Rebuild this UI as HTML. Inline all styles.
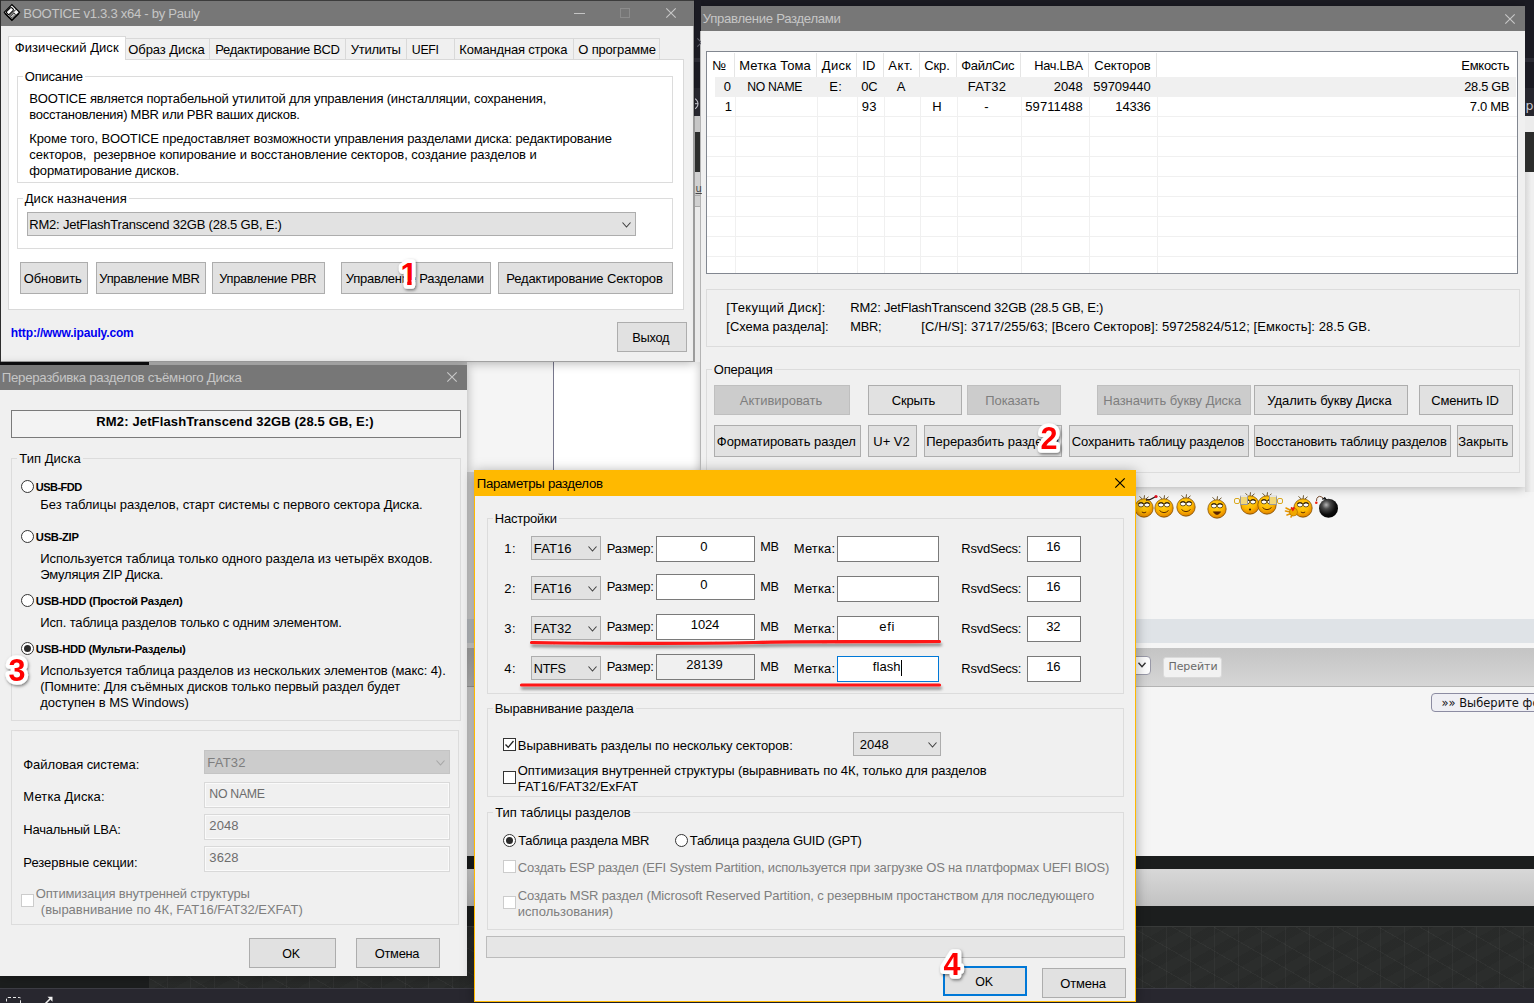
<!DOCTYPE html>
<html lang="ru"><head><meta charset="utf-8"><title>BOOTICE</title>
<style>
html,body{margin:0;padding:0}
body{width:1534px;height:1003px;overflow:hidden;position:relative;background:#f5f5f5;font-family:"Liberation Sans", sans-serif;font-size:13px}
.b{position:absolute;box-sizing:border-box}
.t{position:absolute;white-space:pre;line-height:16px}
svg{position:absolute;overflow:visible}
</style></head><body>
<div class="b" style="left:694px;top:0px;width:840px;height:58px;background:#1b1b23;"></div>
<div class="b" style="left:694px;top:58px;width:840px;height:4px;background:#2b2b34;"></div>
<div class="b" style="left:694px;top:62px;width:840px;height:26px;background:#1b1b23;"></div>
<div class="b" style="left:694px;top:88px;width:840px;height:28px;background:#26262e;"></div>
<div class="b" style="left:694px;top:116px;width:840px;height:15px;background:#d8d8d8;"></div>
<div class="b" style="left:694px;top:131px;width:840px;height:41px;background:#2d2e2d;"></div>
<div class="b" style="left:694px;top:172px;width:840px;height:190px;background:#e4e4e4;"></div>
<div class="b" style="left:694px;top:172px;width:7px;height:190px;background:#d6d6d6;"></div>
<div class="b" style="left:699px;top:172px;width:1px;height:190px;background:#b8b8b8;"></div>
<div class="b" style="left:694px;top:362px;width:840px;height:130px;background:#f5f5f5;"></div>
<div class="b" style="left:467px;top:362px;width:86px;height:110px;background:#f5f5f5;"></div>
<div class="b" style="left:553px;top:362px;width:1px;height:110px;background:#77778c;"></div>
<div class="b" style="left:554px;top:362px;width:147px;height:110px;background:#ffffff;"></div>
<div class="b" style="left:0px;top:362px;width:149px;height:4px;background:#111113;"></div>
<div class="b" style="left:149px;top:362px;width:318px;height:4px;background:#cfcfcf;"></div>
<div class="b" style="left:467px;top:619px;width:1067px;height:24px;background:#dfe3e7;"></div>
<div class="b" style="left:467px;top:648px;width:1067px;height:39px;background:linear-gradient(#c4c4c4,#d6d6d6);border-bottom:1px solid #b4b4b4;"></div>
<div class="b" style="left:467px;top:856px;width:1067px;height:13px;background:#1c1e1e;"></div>
<div class="b" style="left:467px;top:869px;width:1067px;height:37px;background:linear-gradient(#d8d8d8,#c2c2c2);"></div>
<div class="b" style="left:0px;top:906px;width:1534px;height:21px;background:#1c1e1e;"></div>
<div class="b" style="left:0px;top:926px;width:1534px;height:63px;background:repeating-linear-gradient(90deg,rgba(255,255,255,0.035) 0 1px,transparent 1px 23.8px),repeating-linear-gradient(30deg,rgba(255,255,255,0.03) 0 1px,transparent 1px 20.6px),repeating-linear-gradient(-30deg,rgba(0,0,0,0.06) 0 10px,transparent 10px 20.6px),#2b2d2c;border-top:1px solid #383a39;border-bottom:1px solid #3c3e3d;"></div>
<div class="b" style="left:0px;top:926px;width:149px;height:63px;background:#1c1e1e;"></div>
<div class="b" style="left:0px;top:988px;width:1534px;height:1px;background:#3c3c44;"></div>
<div class="b" style="left:0px;top:989px;width:1534px;height:14px;background:#28272f;"></div>
<div class="b" style="left:467px;top:472px;width:7px;height:384px;background:rgba(0,0,0,0.12);"></div>
<svg style="left:1129.7px;top:492.3px" width="28" height="30" viewBox="-14 -16 28 30"><defs><radialGradient id="sg0" cx="45%" cy="35%" r="70%"><stop offset="0" stop-color="#ffd21e"/><stop offset="0.55" stop-color="#fdb800"/><stop offset="0.85" stop-color="#e78b00"/><stop offset="1" stop-color="#9a5a00"/></radialGradient></defs><path d="M-1.5 -8.7 L-4.5 -11.7 M0 -8.7 L0.5 -12.7 M1.5 -8.7 L4.5 -11.2" stroke="#4a3000" stroke-width="0.8" fill="none"/><circle cx="0" cy="0" r="9.2" fill="url(#sg0)" stroke="#7a4a00" stroke-width="0.7"/><ellipse cx="-3" cy="-3.2" rx="2.7" ry="2.1" fill="#fff" stroke="#3a2400" stroke-width="0.7"/><ellipse cx="3" cy="-3.2" rx="2.7" ry="2.1" fill="#fff" stroke="#3a2400" stroke-width="0.7"/><path d="M-5.5 -4.2 Q-3 -6.2 -0.5 -4.2 M0.5 -4.2 Q3 -6.2 5.5 -4.2" fill="none" stroke="#2a1a00" stroke-width="1.1"/><path d="M-2.2 4 Q0 5.8 2.2 4" fill="none" stroke="#5a2a00" stroke-width="1"/></svg>
<svg style="left:1149.7px;top:492px" width="28" height="30" viewBox="-14 -16 28 30"><defs><radialGradient id="sg1" cx="45%" cy="35%" r="70%"><stop offset="0" stop-color="#ffd21e"/><stop offset="0.55" stop-color="#fdb800"/><stop offset="0.85" stop-color="#e78b00"/><stop offset="1" stop-color="#9a5a00"/></radialGradient></defs><path d="M-1.5 -8.7 L-4.5 -11.7 M0 -8.7 L0.5 -12.7 M1.5 -8.7 L4.5 -11.2" stroke="#4a3000" stroke-width="0.8" fill="none"/><circle cx="0" cy="0" r="9.2" fill="url(#sg1)" stroke="#7a4a00" stroke-width="0.7"/><ellipse cx="-3" cy="-3.2" rx="2.7" ry="2.1" fill="#fff" stroke="#3a2400" stroke-width="0.7"/><ellipse cx="3" cy="-3.2" rx="2.7" ry="2.1" fill="#fff" stroke="#3a2400" stroke-width="0.7"/><path d="M-5.5 -4.2 Q-3 -6.2 -0.5 -4.2 M0.5 -4.2 Q3 -6.2 5.5 -4.2" fill="none" stroke="#2a1a00" stroke-width="1.1"/><path d="M-4.5 2.5 Q0 6.8 4.5 2.5" fill="none" stroke="#5a2a00" stroke-width="1"/></svg>
<svg style="left:1171.5px;top:491.2px" width="28" height="30" viewBox="-14 -16 28 30"><defs><radialGradient id="sg2" cx="45%" cy="35%" r="70%"><stop offset="0" stop-color="#ffd21e"/><stop offset="0.55" stop-color="#fdb800"/><stop offset="0.85" stop-color="#e78b00"/><stop offset="1" stop-color="#9a5a00"/></radialGradient></defs><path d="M-1.5 -8.7 L-4.5 -11.7 M0 -8.7 L0.5 -12.7 M1.5 -8.7 L4.5 -11.2" stroke="#4a3000" stroke-width="0.8" fill="none"/><circle cx="0" cy="0" r="9.2" fill="url(#sg2)" stroke="#7a4a00" stroke-width="0.7"/><ellipse cx="-3" cy="-3.2" rx="2.7" ry="2.1" fill="#fff" stroke="#3a2400" stroke-width="0.7"/><ellipse cx="3" cy="-3.2" rx="2.7" ry="2.1" fill="#fff" stroke="#3a2400" stroke-width="0.7"/><path d="M-5.5 -4.2 Q-3 -6.2 -0.5 -4.2 M0.5 -4.2 Q3 -6.2 5.5 -4.2" fill="none" stroke="#2a1a00" stroke-width="1.1"/><path d="M-4.5 2.5 Q0 6.8 4.5 2.5" fill="none" stroke="#5a2a00" stroke-width="1"/></svg>
<svg style="left:1202.5px;top:492.5px" width="28" height="30" viewBox="-14 -16 28 30"><defs><radialGradient id="sg3" cx="45%" cy="35%" r="70%"><stop offset="0" stop-color="#ffd21e"/><stop offset="0.55" stop-color="#fdb800"/><stop offset="0.85" stop-color="#e78b00"/><stop offset="1" stop-color="#9a5a00"/></radialGradient></defs><path d="M-1.5 -8.7 L-4.5 -11.7 M0 -8.7 L0.5 -12.7 M1.5 -8.7 L4.5 -11.2" stroke="#4a3000" stroke-width="0.8" fill="none"/><circle cx="0" cy="0" r="9.2" fill="url(#sg3)" stroke="#7a4a00" stroke-width="0.7"/><ellipse cx="-3" cy="-3.2" rx="2.7" ry="2.1" fill="#fff" stroke="#3a2400" stroke-width="0.7"/><ellipse cx="3" cy="-3.2" rx="2.7" ry="2.1" fill="#fff" stroke="#3a2400" stroke-width="0.7"/><path d="M-5.5 -4.2 Q-3 -6.2 -0.5 -4.2 M0.5 -4.2 Q3 -6.2 5.5 -4.2" fill="none" stroke="#2a1a00" stroke-width="1.1"/><path d="M-3.8 2.8 Q0 8.5 3.8 2.8 Z" fill="#5a2000" stroke="#5a2a00" stroke-width="0.6"/></svg>
<svg style="left:1236px;top:489.4px" width="28" height="30" viewBox="-14 -16 28 30"><defs><radialGradient id="sg4" cx="45%" cy="35%" r="70%"><stop offset="0" stop-color="#ffd21e"/><stop offset="0.55" stop-color="#fdb800"/><stop offset="0.85" stop-color="#e78b00"/><stop offset="1" stop-color="#9a5a00"/></radialGradient></defs><path d="M-1.5 -8.7 L-4.5 -11.7 M0 -8.7 L0.5 -12.7 M1.5 -8.7 L4.5 -11.2" stroke="#4a3000" stroke-width="0.8" fill="none"/><circle cx="0" cy="0" r="9.2" fill="url(#sg4)" stroke="#7a4a00" stroke-width="0.7"/><ellipse cx="-3" cy="-3.2" rx="2.7" ry="2.1" fill="#fff" stroke="#3a2400" stroke-width="0.7"/><ellipse cx="3" cy="-3.2" rx="2.7" ry="2.1" fill="#fff" stroke="#3a2400" stroke-width="0.7"/><path d="M-5.5 -4.2 Q-3 -6.2 -0.5 -4.2 M0.5 -4.2 Q3 -6.2 5.5 -4.2" fill="none" stroke="#2a1a00" stroke-width="1.1"/><circle cx="0" cy="4.5" r="1.1" fill="#3a1a00"/></svg>
<svg style="left:1253.3px;top:489.2px" width="28" height="30" viewBox="-14 -16 28 30"><defs><radialGradient id="sg5" cx="45%" cy="35%" r="70%"><stop offset="0" stop-color="#ffd21e"/><stop offset="0.55" stop-color="#fdb800"/><stop offset="0.85" stop-color="#e78b00"/><stop offset="1" stop-color="#9a5a00"/></radialGradient></defs><path d="M-1.5 -8.7 L-4.5 -11.7 M0 -8.7 L0.5 -12.7 M1.5 -8.7 L4.5 -11.2" stroke="#4a3000" stroke-width="0.8" fill="none"/><circle cx="0" cy="0" r="9.2" fill="url(#sg5)" stroke="#7a4a00" stroke-width="0.7"/><ellipse cx="-3" cy="-3.2" rx="2.7" ry="2.1" fill="#fff" stroke="#3a2400" stroke-width="0.7"/><ellipse cx="3" cy="-3.2" rx="2.7" ry="2.1" fill="#fff" stroke="#3a2400" stroke-width="0.7"/><path d="M-5.5 -4.2 Q-3 -6.2 -0.5 -4.2 M0.5 -4.2 Q3 -6.2 5.5 -4.2" fill="none" stroke="#2a1a00" stroke-width="1.1"/><path d="M-4.5 2.5 Q0 6.8 4.5 2.5" fill="none" stroke="#5a2a00" stroke-width="1"/></svg>
<svg style="left:1288.6px;top:492.2px" width="28" height="30" viewBox="-14 -16 28 30"><defs><radialGradient id="sg6" cx="45%" cy="35%" r="70%"><stop offset="0" stop-color="#ffd21e"/><stop offset="0.55" stop-color="#fdb800"/><stop offset="0.85" stop-color="#e78b00"/><stop offset="1" stop-color="#9a5a00"/></radialGradient></defs><path d="M-1.5 -8.7 L-4.5 -11.7 M0 -8.7 L0.5 -12.7 M1.5 -8.7 L4.5 -11.2" stroke="#4a3000" stroke-width="0.8" fill="none"/><circle cx="0" cy="0" r="9.2" fill="url(#sg6)" stroke="#7a4a00" stroke-width="0.7"/><ellipse cx="-3" cy="-3.2" rx="2.7" ry="2.1" fill="#fff" stroke="#3a2400" stroke-width="0.7"/><ellipse cx="3" cy="-3.2" rx="2.7" ry="2.1" fill="#fff" stroke="#3a2400" stroke-width="0.7"/><path d="M-5.5 -4.2 Q-3 -6.2 -0.5 -4.2 M0.5 -4.2 Q3 -6.2 5.5 -4.2" fill="none" stroke="#2a1a00" stroke-width="1.1"/><path d="M-2.2 4 Q0 5.8 2.2 4" fill="none" stroke="#5a2a00" stroke-width="1"/></svg>
<svg style="left:1146px;top:494px" width="14" height="8" viewBox="0 0 14 8"><path d="M0 6 Q5 6 9 3" fill="none" stroke="#2a1a1a" stroke-width="1.3"/><circle cx="10" cy="2.5" r="1.6" fill="#e01020"/></svg>
<div class="b" style="left:1240px;top:495px;width:8px;height:10px;background:#f1d77a;border:1px solid #9a9a9a;border-radius:1px;border-top:2px solid #e8e8e8;"></div>
<div class="b" style="left:1234px;top:498px;width:6px;height:6px;border:1.5px solid #d8a820;border-radius:2px;"></div>
<div class="b" style="left:1269px;top:495px;width:8px;height:10px;background:#f1d77a;border:1px solid #9a9a9a;border-radius:1px;border-top:2px solid #e8e8e8;"></div>
<div class="b" style="left:1277px;top:498px;width:6px;height:6px;border:1.5px solid #d8a820;border-radius:2px;"></div>
<svg style="left:1285px;top:505px" width="15" height="13" viewBox="0 0 15 13"><path d="M1 3 L5 5 M0.5 6 L5 7 M2 10 L6 8.5 M6 12 L8 9" stroke="#e59500" stroke-width="1.6" stroke-linecap="round"/><circle cx="8.5" cy="7" r="4" fill="#f2a800" stroke="#a86a00" stroke-width="0.6"/><path d="M6.5 4.5 Q5 2.5 6.5 2 Q7.5 2 7.8 3 Q8.2 2 9.2 2 Q10.5 2.5 9 4.8 L7.8 6.5 Z" fill="#e82010"/></svg>
<svg style="left:1314px;top:494px" width="28" height="26" viewBox="0 0 28 26"><defs><radialGradient id="bg1" cx="38%" cy="32%" r="72%"><stop offset="0" stop-color="#b4b4b4"/><stop offset="0.3" stop-color="#4a4a4a"/><stop offset="0.7" stop-color="#0c0c0c"/><stop offset="1" stop-color="#000"/></radialGradient></defs><circle cx="14.5" cy="14.3" r="9.5" fill="url(#bg1)"/><path d="M8 5.2 L11 3.5 L12.5 6" fill="#222" stroke="#111" stroke-width="1"/><path d="M9 4 Q5 0.5 2.8 4.5 L2.5 7" fill="none" stroke="#6a3a1a" stroke-width="0.9"/><circle cx="2.3" cy="8.8" r="1.3" fill="#f02010"/></svg>
<div class="b" style="left:1120px;top:656px;width:31px;height:19px;background:#fdfdfd;border:1px solid #9a9aa8;border-radius:4px;"></div>
<svg style="left:1138px;top:662px" width="8" height="6" viewBox="0 0 8 6"><path d="M0.5 0.8 L4 4.6 L7.5 0.8" fill="none" stroke="#333" stroke-width="1.4"/></svg>
<div class="b" style="left:1163px;top:657px;width:59px;height:21px;background:#f2f2f2;border:1px solid #dadada;border-radius:3px;"></div>
<span class="t" style="left:1168.41px;top:659.00px;font-size:11px;color:#6a6a6a;font-family:'DejaVu Sans', 'Liberation Sans', sans-serif;letter-spacing:-0.045px;">Перейти</span>
<div class="b" style="left:1431px;top:693px;width:120px;height:19px;background:#efeff4;border:1px solid #8c8ca2;border-radius:4px;"></div>
<span class="t" style="left:1441.50px;top:695.00px;font-size:11.5px;color:#111;font-family:'DejaVu Sans', 'Liberation Sans', sans-serif;">»» Выберите форум</span>
<div class="b" style="left:6px;top:997px;width:15px;height:10px;border:1.3px solid #e8e8e8;border-style:dashed;border-radius:2px;"></div>
<svg style="left:44px;top:996px" width="10" height="8" viewBox="0 0 10 8"><path d="M1 8 L6 3" fill="none" stroke="#f0f0f0" stroke-width="1.5"/><path d="M3.5 0.8 L8.5 0.8 L8.5 5.8 Z" fill="#f0f0f0"/></svg>
<div class="b" style="left:0px;top:0px;width:694px;height:362px;background:#f0f0f0;box-shadow:0 1px 10px rgba(0,0,0,0.30);border-right:1px solid #a0a0a0;border-bottom:1px solid #a0a0a0;"></div>
<div class="b" style="left:0px;top:0px;width:694px;height:26px;background:#777777;border-top:1px solid #3c3c3c;"></div>
<div class="b" style="left:0px;top:0px;width:1px;height:362px;background:#2e2e2e;"></div>
<svg style="left:0;top:0" width="24" height="24" viewBox="0 0 24 24"><g transform="translate(11.9 4.6) rotate(45)"><rect x="1" y="1" width="10.8" height="10.8" fill="#000"/><rect x="0" y="0" width="10.8" height="10.8" fill="#f6f6f6" stroke="#000" stroke-width="1.2"/><rect x="1.1" y="2.3" width="3.9" height="7.2" rx="1.1" fill="#fff" stroke="#000" stroke-width="1.1"/><path d="M6.3 0.6 V10.2" stroke="#000" stroke-width="0.9"/><rect x="7.3" y="4.4" width="2.6" height="5.2" fill="#fff" stroke="#000" stroke-width="0.8"/><path d="M8.6 4.6 V9.4" stroke="#222" stroke-width="0.6"/></g></svg>
<span class="t" style="left:23.27px;top:6.00px;font-size:13.12px;color:#c6c6c6;letter-spacing:-0.300px;">BOOTICE v1.3.3 x64 - by Pauly</span>
<div class="b" style="left:574px;top:12.5px;width:10.5px;height:1px;background:#c4c4c4;"></div>
<div class="b" style="left:620px;top:8px;width:10px;height:10px;border:1px solid #8c8c8c;"></div>
<svg style="left:666px;top:8px" width="10" height="10" viewBox="0 0 10 10"><path d="M0.3 0.3 L9.7 9.7 M9.7 0.3 L0.3 9.7" fill="none" stroke="#c8c8c8" stroke-width="1.1"/></svg>
<div class="b" style="left:8px;top:59px;width:676px;height:251px;background:#ffffff;border:1px solid #d9d9d9;"></div>
<div class="b" style="left:125px;top:38px;width:85px;height:22px;background:#f0f0f0;border:1px solid #d9d9d9;"></div>
<span class="t" style="left:128.30px;top:42.00px;font-size:13px;color:#000;letter-spacing:-0.074px;">Образ Диска</span>
<div class="b" style="left:209px;top:38px;width:137px;height:22px;background:#f0f0f0;border:1px solid #d9d9d9;"></div>
<span class="t" style="left:215.30px;top:42.00px;font-size:12.97px;color:#000;letter-spacing:-0.300px;">Редактирование BCD</span>
<div class="b" style="left:345px;top:38px;width:62px;height:22px;background:#f0f0f0;border:1px solid #d9d9d9;"></div>
<span class="t" style="left:350.80px;top:42.00px;font-size:13px;color:#000;letter-spacing:-0.246px;">Утилиты</span>
<div class="b" style="left:406px;top:38px;width:49px;height:22px;background:#f0f0f0;border:1px solid #d9d9d9;"></div>
<span class="t" style="left:411.80px;top:42.00px;font-size:12.33px;color:#000;letter-spacing:-0.300px;">UEFI</span>
<div class="b" style="left:454px;top:38px;width:120px;height:22px;background:#f0f0f0;border:1px solid #d9d9d9;"></div>
<span class="t" style="left:459.30px;top:42.00px;font-size:13px;color:#000;letter-spacing:-0.189px;">Командная строка</span>
<div class="b" style="left:573px;top:38px;width:87px;height:22px;background:#f0f0f0;border:1px solid #d9d9d9;"></div>
<span class="t" style="left:578.30px;top:42.00px;font-size:13px;color:#000;letter-spacing:-0.194px;">О программе</span>
<div class="b" style="left:8px;top:36px;width:118px;height:24px;background:#ffffff;border:1px solid #d9d9d9;border-bottom:none;"></div>
<span class="t" style="left:14.80px;top:39.50px;font-size:13px;color:#000;letter-spacing:0.063px;">Физический Диск</span>
<div class="b" style="left:17px;top:76px;width:656px;height:107px;border:1px solid #dcdcdc;"></div>
<div class="b" style="left:22.5px;top:74px;width:62.5px;height:5px;background:#fff;"></div>
<span class="t" style="left:24.80px;top:69.00px;font-size:13px;color:#000;letter-spacing:-0.241px;">Описание</span>
<span class="t" style="left:29.30px;top:91.00px;font-size:13px;color:#000;letter-spacing:-0.177px;">BOOTICE является портабельной утилитой для управления (инсталляции, сохранения,</span>
<span class="t" style="left:29.30px;top:107.00px;font-size:13px;color:#000;letter-spacing:-0.248px;">восстановления) MBR или PBR ваших дисков.</span>
<span class="t" style="left:29.30px;top:131.00px;font-size:13px;color:#000;letter-spacing:-0.140px;">Кроме того, BOOTICE предоставляет возможности управления разделами диска: редактирование</span>
<span class="t" style="left:29.30px;top:147.00px;font-size:13px;color:#000;letter-spacing:-0.063px;">секторов,  резервное копирование и восстановление секторов, создание разделов и</span>
<span class="t" style="left:29.30px;top:163.00px;font-size:13px;color:#000;letter-spacing:-0.137px;">форматирование дисков.</span>
<div class="b" style="left:17px;top:198px;width:656px;height:51px;border:1px solid #dcdcdc;"></div>
<div class="b" style="left:22.5px;top:196px;width:106.5px;height:5px;background:#fff;"></div>
<span class="t" style="left:24.80px;top:190.50px;font-size:13px;color:#000;letter-spacing:0.013px;">Диск назначения</span>
<div class="b" style="left:27px;top:212px;width:609px;height:24px;background:#e2e2e2;border:1px solid #adadad;"></div>
<span class="t" style="left:29.30px;top:216.50px;font-size:13px;color:#000;letter-spacing:-0.212px;">RM2: JetFlashTranscend 32GB (28.5 GB, E:)</span>
<svg style="left:622px;top:222px" width="9" height="6" viewBox="0 0 9 6"><path d="M0.5 0.5 L4.5 5 L8.5 0.5" fill="none" stroke="#404040" stroke-width="1.1"/></svg>
<div class="b" style="left:20px;top:262px;width:68px;height:32px;background:#e1e1e1;border:1px solid #adadad;"></div>
<span class="t" style="left:23.80px;top:271.00px;font-size:13px;color:#000;letter-spacing:-0.122px;">Обновить</span>
<div class="b" style="left:96px;top:262px;width:110px;height:32px;background:#e1e1e1;border:1px solid #adadad;"></div>
<span class="t" style="left:99.30px;top:271.00px;font-size:12.98px;color:#000;letter-spacing:-0.300px;">Управление MBR</span>
<div class="b" style="left:212px;top:262px;width:113px;height:32px;background:#e1e1e1;border:1px solid #adadad;"></div>
<span class="t" style="left:219.30px;top:271.00px;font-size:12.81px;color:#000;letter-spacing:-0.300px;">Управление PBR</span>
<div class="b" style="left:341px;top:262px;width:150px;height:32px;background:#e1e1e1;border:1px solid #adadad;"></div>
<span class="t" style="left:345.80px;top:271.00px;font-size:13px;color:#000;letter-spacing:-0.219px;">Управление Разделами</span>
<div class="b" style="left:498px;top:262px;width:175px;height:32px;background:#e1e1e1;border:1px solid #adadad;"></div>
<span class="t" style="left:506.30px;top:271.00px;font-size:13px;color:#000;letter-spacing:-0.135px;">Редактирование Секторов</span>
<div class="b" style="left:617px;top:322px;width:70px;height:30px;background:#e1e1e1;border:1px solid #adadad;"></div>
<span class="t" style="left:632.30px;top:330.00px;font-size:12.83px;color:#000;letter-spacing:-0.300px;">Выход</span>
<span class="t" style="left:10.85px;top:325.00px;font-size:12px;color:#0000f0;font-weight:bold;letter-spacing:-0.153px;">http://www.ipauly.com</span>
<svg style="left:0;top:0" width="1534" height="1003" viewBox="0 0 1534 1003"><defs><filter id="sh1b" filterUnits="userSpaceOnUse" x="385.4" y="245" width="50" height="60"><feDropShadow dx="1" dy="1.5" stdDeviation="1.8" flood-color="#000" flood-opacity="0.5"/></filter><clipPath id="c1a"><rect x="390.4" y="245" width="40" height="32"/><rect x="403.59999999999997" y="255" width="11.6" height="33.9" rx="3.7"/></clipPath><clipPath id="c1b"><rect x="390.4" y="245" width="40" height="35"/><rect x="407.2" y="255" width="4.4" height="30.2"/></clipPath></defs><g filter="url(#sh1b)"><text x="400.4" y="285" font-family="Liberation Sans, sans-serif" font-weight="bold" font-size="30.5" fill="#fff" stroke="#fff" stroke-width="7.5" stroke-linejoin="round" clip-path="url(#c1a)">1</text></g><text x="400.4" y="285" font-family="Liberation Sans, sans-serif" font-weight="bold" font-size="30.5" fill="#ff0000" clip-path="url(#c1b)" aria-hidden="true">1</text></svg>
<div class="b" style="left:701px;top:6px;width:824px;height:481px;background:#f0f0f0;box-shadow:0 1px 10px rgba(0,0,0,0.30);"></div>
<div class="b" style="left:701px;top:6px;width:824px;height:25px;background:#777777;"></div>
<span class="t" style="left:702.77px;top:11.00px;font-size:13.15px;color:#c6c6c6;letter-spacing:-0.300px;">Управление Разделами</span>
<svg style="left:1505px;top:13.5px" width="10" height="10" viewBox="0 0 10 10"><path d="M0.3 0.3 L9.7 9.7 M9.7 0.3 L0.3 9.7" fill="none" stroke="#c8c8c8" stroke-width="1.1"/></svg>
<div class="b" style="left:706px;top:51px;width:812px;height:223px;background:#ffffff;border:1px solid #828790;"></div>
<div class="b" style="left:734px;top:53px;width:1px;height:24px;background:#e5e5e5;"></div>
<div class="b" style="left:816px;top:53px;width:1px;height:24px;background:#e5e5e5;"></div>
<div class="b" style="left:856px;top:53px;width:1px;height:24px;background:#e5e5e5;"></div>
<div class="b" style="left:883px;top:53px;width:1px;height:24px;background:#e5e5e5;"></div>
<div class="b" style="left:919px;top:53px;width:1px;height:24px;background:#e5e5e5;"></div>
<div class="b" style="left:956px;top:53px;width:1px;height:24px;background:#e5e5e5;"></div>
<div class="b" style="left:1020px;top:53px;width:1px;height:24px;background:#e5e5e5;"></div>
<div class="b" style="left:1088px;top:53px;width:1px;height:24px;background:#e5e5e5;"></div>
<div class="b" style="left:1156px;top:53px;width:1px;height:24px;background:#e5e5e5;"></div>
<div class="b" style="left:715px;top:77px;width:801px;height:20px;background:#f0f0f0;"></div>
<div class="b" style="left:707px;top:116px;width:810px;height:1px;background:#f0f0f0;"></div>
<div class="b" style="left:707px;top:136px;width:810px;height:1px;background:#f0f0f0;"></div>
<div class="b" style="left:707px;top:156px;width:810px;height:1px;background:#f0f0f0;"></div>
<div class="b" style="left:707px;top:176px;width:810px;height:1px;background:#f0f0f0;"></div>
<div class="b" style="left:707px;top:196px;width:810px;height:1px;background:#f0f0f0;"></div>
<div class="b" style="left:707px;top:216px;width:810px;height:1px;background:#f0f0f0;"></div>
<div class="b" style="left:707px;top:236px;width:810px;height:1px;background:#f0f0f0;"></div>
<div class="b" style="left:707px;top:256px;width:810px;height:1px;background:#f0f0f0;"></div>
<div class="b" style="left:735px;top:97px;width:1px;height:176px;background:#f0f0f0;"></div>
<div class="b" style="left:817px;top:97px;width:1px;height:176px;background:#f0f0f0;"></div>
<div class="b" style="left:857px;top:97px;width:1px;height:176px;background:#f0f0f0;"></div>
<div class="b" style="left:884px;top:97px;width:1px;height:176px;background:#f0f0f0;"></div>
<div class="b" style="left:920px;top:97px;width:1px;height:176px;background:#f0f0f0;"></div>
<div class="b" style="left:957px;top:97px;width:1px;height:176px;background:#f0f0f0;"></div>
<div class="b" style="left:1021px;top:97px;width:1px;height:176px;background:#f0f0f0;"></div>
<div class="b" style="left:1089px;top:97px;width:1px;height:176px;background:#f0f0f0;"></div>
<div class="b" style="left:1157px;top:97px;width:1px;height:176px;background:#f0f0f0;"></div>
<span class="t" style="left:712.30px;top:57.50px;font-size:13px;color:#000;">№</span>
<span class="t" style="left:739.30px;top:57.50px;font-size:13px;color:#000;letter-spacing:0.053px;">Метка Тома</span>
<span class="t" style="left:821.80px;top:57.50px;font-size:13px;color:#000;letter-spacing:0.284px;">Диск</span>
<span class="t" style="left:862.30px;top:57.50px;font-size:13px;color:#000;letter-spacing:0.200px;">ID</span>
<span class="t" style="left:888.30px;top:57.50px;font-size:13px;color:#000;letter-spacing:0.565px;">Акт.</span>
<span class="t" style="left:924.30px;top:57.50px;font-size:13px;color:#000;letter-spacing:-0.130px;">Скр.</span>
<span class="t" style="left:961.30px;top:57.50px;font-size:12.97px;color:#000;letter-spacing:-0.300px;">ФайлСис</span>
<span class="t" style="left:1034.30px;top:57.50px;font-size:12.8px;color:#000;letter-spacing:-0.300px;">Нач.LBA</span>
<span class="t" style="left:1094.30px;top:57.50px;font-size:13px;color:#000;letter-spacing:-0.057px;">Секторов</span>
<span class="t" style="left:1461.30px;top:57.50px;font-size:13px;color:#000;letter-spacing:-0.287px;">Емкость</span>
<span class="t" style="left:723.80px;top:79.00px;font-size:13px;color:#000;">0</span>
<span class="t" style="left:747.30px;top:79.00px;font-size:12.21px;color:#000;letter-spacing:-0.300px;">NO NAME</span>
<span class="t" style="left:829.30px;top:79.00px;font-size:13px;color:#000;letter-spacing:0.302px;">E:</span>
<span class="t" style="left:861.30px;top:79.00px;font-size:12.9px;color:#000;letter-spacing:-0.300px;">0C</span>
<span class="t" style="left:896.80px;top:79.00px;font-size:13px;color:#000;">A</span>
<span class="t" style="left:967.80px;top:79.00px;font-size:13px;color:#000;letter-spacing:0.211px;">FAT32</span>
<span class="t" style="left:1053.80px;top:79.00px;font-size:13px;color:#000;letter-spacing:-0.005px;">2048</span>
<span class="t" style="left:1093.30px;top:79.00px;font-size:13px;color:#000;letter-spacing:-0.055px;">59709440</span>
<span class="t" style="left:1464.30px;top:79.00px;font-size:12.81px;color:#000;letter-spacing:-0.300px;">28.5 GB</span>
<span class="t" style="left:724.80px;top:99.00px;font-size:13px;color:#000;">1</span>
<span class="t" style="left:861.80px;top:99.00px;font-size:13px;color:#000;letter-spacing:0.216px;">93</span>
<span class="t" style="left:932.30px;top:99.00px;font-size:13px;color:#000;">H</span>
<span class="t" style="left:984.30px;top:99.00px;font-size:13px;color:#000;">-</span>
<span class="t" style="left:1025.30px;top:99.00px;font-size:13px;color:#000;letter-spacing:0.066px;">59711488</span>
<span class="t" style="left:1115.30px;top:99.00px;font-size:13px;color:#000;letter-spacing:-0.151px;">14336</span>
<span class="t" style="left:1469.80px;top:99.00px;font-size:13px;color:#000;letter-spacing:-0.298px;">7.0 MB</span>
<div class="b" style="left:706px;top:289px;width:814px;height:58px;border:1px solid #dcdcdc;"></div>
<span class="t" style="left:726.30px;top:300.00px;font-size:13px;color:#000;letter-spacing:0.313px;">[Текущий Диск]:</span>
<span class="t" style="left:850.30px;top:300.00px;font-size:13px;color:#000;letter-spacing:-0.199px;">RM2: JetFlashTranscend 32GB (28.5 GB, E:)</span>
<span class="t" style="left:726.30px;top:318.50px;font-size:13px;color:#000;letter-spacing:-0.024px;">[Схема раздела]:</span>
<span class="t" style="left:850.30px;top:318.50px;font-size:12.84px;color:#000;letter-spacing:-0.300px;">MBR;</span>
<span class="t" style="left:921.30px;top:318.50px;font-size:13px;color:#000;letter-spacing:0.078px;">[C/H/S]: 3717/255/63; [Всего Секторов]: 59725824/512; [Емкость]: 28.5 GB.</span>
<div class="b" style="left:706px;top:369px;width:814px;height:104px;border:1px solid #dcdcdc;"></div>
<div class="b" style="left:711.5px;top:367px;width:63.5px;height:5px;background:#f0f0f0;"></div>
<span class="t" style="left:713.80px;top:362.00px;font-size:13px;color:#000;letter-spacing:-0.212px;">Операция</span>
<div class="b" style="left:714px;top:385px;width:136px;height:30px;background:#cccccc;border:1px solid #bfbfbf;"></div>
<span class="t" style="left:739.80px;top:393.00px;font-size:13px;color:#7e7e7e;letter-spacing:-0.032px;">Активировать</span>
<div class="b" style="left:868px;top:385px;width:94px;height:30px;background:#e1e1e1;border:1px solid #adadad;"></div>
<span class="t" style="left:891.80px;top:393.00px;font-size:13px;color:#000;letter-spacing:-0.165px;">Скрыть</span>
<div class="b" style="left:967px;top:385px;width:94px;height:30px;background:#cccccc;border:1px solid #bfbfbf;"></div>
<span class="t" style="left:985.30px;top:393.00px;font-size:13px;color:#7e7e7e;letter-spacing:-0.108px;">Показать</span>
<div class="b" style="left:1097px;top:385px;width:154px;height:30px;background:#cccccc;border:1px solid #bfbfbf;"></div>
<span class="t" style="left:1103.30px;top:393.00px;font-size:13px;color:#7e7e7e;letter-spacing:-0.042px;">Назначить букву Диска</span>
<div class="b" style="left:1254px;top:385px;width:154px;height:30px;background:#e1e1e1;border:1px solid #adadad;"></div>
<span class="t" style="left:1267.30px;top:393.00px;font-size:13px;color:#000;letter-spacing:-0.037px;">Удалить букву Диска</span>
<div class="b" style="left:1419px;top:385px;width:94px;height:30px;background:#e1e1e1;border:1px solid #adadad;"></div>
<span class="t" style="left:1431.30px;top:393.00px;font-size:13px;color:#000;letter-spacing:-0.194px;">Сменить ID</span>
<div class="b" style="left:714px;top:425px;width:147px;height:32px;background:#e1e1e1;border:1px solid #adadad;"></div>
<span class="t" style="left:716.80px;top:434.00px;font-size:13px;color:#000;letter-spacing:-0.050px;">Форматировать раздел</span>
<div class="b" style="left:868px;top:425px;width:49px;height:32px;background:#e1e1e1;border:1px solid #adadad;"></div>
<span class="t" style="left:873.30px;top:434.00px;font-size:13px;color:#000;letter-spacing:-0.020px;">U+ V2</span>
<div class="b" style="left:924px;top:425px;width:138px;height:32px;background:#e1e1e1;border:1px solid #adadad;"></div>
<span class="t" style="left:926.30px;top:434.00px;font-size:13px;color:#000;letter-spacing:-0.059px;">Переразбить разделы</span>
<div class="b" style="left:1069px;top:425px;width:180px;height:32px;background:#e1e1e1;border:1px solid #adadad;"></div>
<span class="t" style="left:1071.80px;top:434.00px;font-size:13px;color:#000;letter-spacing:-0.168px;">Сохранить таблицу разделов</span>
<div class="b" style="left:1254px;top:425px;width:197px;height:32px;background:#e1e1e1;border:1px solid #adadad;"></div>
<span class="t" style="left:1255.30px;top:434.00px;font-size:13px;color:#000;letter-spacing:-0.138px;">Восстановить таблицу разделов</span>
<div class="b" style="left:1457px;top:425px;width:56px;height:32px;background:#e1e1e1;border:1px solid #adadad;"></div>
<span class="t" style="left:1458.30px;top:434.00px;font-size:13px;color:#000;letter-spacing:-0.025px;">Закрыть</span>
<svg style="left:1024px;top:409px" width="50" height="60" viewBox="0 0 50 60"><defs><filter id="sh2" x="-50%" y="-50%" width="200%" height="200%"><feDropShadow dx="1" dy="1.5" stdDeviation="1.8" flood-color="#000" flood-opacity="0.5"/></filter></defs><text x="25" y="40" text-anchor="middle" font-family="Liberation Sans, sans-serif" font-weight="bold" font-size="30.5" fill="#ff0000" stroke="#fff" stroke-width="7.5" stroke-linejoin="round" paint-order="stroke" filter="url(#sh2)">2</text></svg>
<div class="b" style="left:0px;top:365px;width:467px;height:611px;background:#f0f0f0;box-shadow:0 1px 10px rgba(0,0,0,0.30);"></div>
<div class="b" style="left:0px;top:365px;width:467px;height:25px;background:#777777;"></div>
<span class="t" style="left:1.77px;top:370.00px;font-size:13.27px;color:#c6c6c6;letter-spacing:-0.300px;">Переразбивка разделов съёмного Диска</span>
<svg style="left:447px;top:372px" width="10" height="10" viewBox="0 0 10 10"><path d="M0.3 0.3 L9.7 9.7 M9.7 0.3 L0.3 9.7" fill="none" stroke="#c8c8c8" stroke-width="1.1"/></svg>
<div class="b" style="left:11px;top:410px;width:450px;height:28px;background:#f3f3f3;border:1px solid #7a7a7a;"></div>
<span class="t" style="left:96.30px;top:413.50px;font-size:13px;color:#000;font-weight:bold;letter-spacing:0.140px;">RM2: JetFlashTranscend 32GB (28.5 GB, E:)</span>
<div class="b" style="left:11px;top:458px;width:450px;height:263px;border:1px solid #dcdcdc;"></div>
<div class="b" style="left:17px;top:456px;width:66px;height:5px;background:#f0f0f0;"></div>
<span class="t" style="left:19.30px;top:451.00px;font-size:13px;color:#000;letter-spacing:0.037px;">Тип Диска</span>
<div class="b" style="left:21.0px;top:479.5px;width:13px;height:13px;background:#fff;border:1px solid #333;border-radius:50%;"></div>
<span class="t" style="left:35.85px;top:479.00px;font-size:11.04px;color:#000;font-weight:bold;letter-spacing:-0.555px;">USB-FDD</span>
<span class="t" style="left:40.30px;top:497.00px;font-size:13px;color:#000;letter-spacing:-0.058px;">Без таблицы разделов, старт системы с первого сектора Диска.</span>
<div class="b" style="left:21.0px;top:530.0px;width:13px;height:13px;background:#fff;border:1px solid #333;border-radius:50%;"></div>
<span class="t" style="left:35.85px;top:528.50px;font-size:11.22px;color:#000;font-weight:bold;letter-spacing:-0.300px;">USB-ZIP</span>
<span class="t" style="left:40.30px;top:551.00px;font-size:13px;color:#000;letter-spacing:-0.056px;">Используется таблица только одного раздела из четырёх входов.</span>
<span class="t" style="left:40.30px;top:567.00px;font-size:13px;color:#000;letter-spacing:-0.240px;">Эмуляция ZIP Диска.</span>
<div class="b" style="left:21.0px;top:594.0px;width:13px;height:13px;background:#fff;border:1px solid #333;border-radius:50%;"></div>
<span class="t" style="left:35.85px;top:592.50px;font-size:11.35px;color:#000;font-weight:bold;letter-spacing:-0.300px;">USB-HDD (Простой Раздел)</span>
<span class="t" style="left:40.30px;top:615.00px;font-size:13px;color:#000;letter-spacing:-0.151px;">Исп. таблица разделов только с одним элементом.</span>
<div class="b" style="left:21.0px;top:642.0px;width:13px;height:13px;background:#fff;border:1px solid #333;border-radius:50%;"><div class="b" style="left:2px;top:2px;width:7px;height:7px;border-radius:50%;background:#2a2a2a"></div></div>
<span class="t" style="left:35.85px;top:640.50px;font-size:11.27px;color:#000;font-weight:bold;letter-spacing:-0.300px;">USB-HDD (Мульти-Разделы)</span>
<span class="t" style="left:40.30px;top:663.00px;font-size:13px;color:#000;letter-spacing:-0.076px;">Используется таблица разделов из нескольких элементов (макс: 4).</span>
<span class="t" style="left:40.30px;top:679.00px;font-size:13px;color:#000;letter-spacing:-0.102px;">(Помните: Для съёмных дисков только первый раздел будет</span>
<span class="t" style="left:40.30px;top:695.00px;font-size:13px;color:#000;letter-spacing:-0.058px;">доступен в MS Windows)</span>
<svg style="left:-8px;top:641px" width="50" height="60" viewBox="0 0 50 60"><defs><filter id="sh3" x="-50%" y="-50%" width="200%" height="200%"><feDropShadow dx="1" dy="1.5" stdDeviation="1.8" flood-color="#000" flood-opacity="0.5"/></filter></defs><text x="25" y="40" text-anchor="middle" font-family="Liberation Sans, sans-serif" font-weight="bold" font-size="30.5" fill="#ff0000" stroke="#fff" stroke-width="7.5" stroke-linejoin="round" paint-order="stroke" filter="url(#sh3)">3</text></svg>
<div class="b" style="left:11px;top:730px;width:448px;height:195px;border:1px solid #dcdcdc;"></div>
<span class="t" style="left:23.30px;top:756.50px;font-size:13px;color:#000;letter-spacing:-0.068px;">Файловая система:</span>
<div class="b" style="left:204px;top:750px;width:246px;height:24px;background:#cccccc;border:1px solid #c4c4c4;"></div>
<span class="t" style="left:207.30px;top:754.50px;font-size:13px;color:#7e7e7e;letter-spacing:0.211px;">FAT32</span>
<svg style="left:436px;top:760px" width="9" height="6" viewBox="0 0 9 6"><path d="M0.5 0.5 L4.5 5 L8.5 0.5" fill="none" stroke="#a8a8a8" stroke-width="1.1"/></svg>
<span class="t" style="left:23.30px;top:788.50px;font-size:13px;color:#000;letter-spacing:0.122px;">Метка Диска:</span>
<div class="b" style="left:204px;top:782px;width:246px;height:26px;background:#f0f0f0;border:1px solid #d9d9d9;box-shadow:inset 0 0 0 1px #fafafa;"></div>
<span class="t" style="left:209.30px;top:785.50px;font-size:12.32px;color:#6d6d6d;letter-spacing:-0.300px;">NO NAME</span>
<span class="t" style="left:23.30px;top:822.00px;font-size:13px;color:#000;letter-spacing:-0.206px;">Начальный LBA:</span>
<div class="b" style="left:204px;top:814px;width:246px;height:26px;background:#f0f0f0;border:1px solid #d9d9d9;box-shadow:inset 0 0 0 1px #fafafa;"></div>
<span class="t" style="left:209.30px;top:817.50px;font-size:13px;color:#6d6d6d;letter-spacing:0.120px;">2048</span>
<span class="t" style="left:23.30px;top:854.50px;font-size:13px;color:#000;letter-spacing:-0.011px;">Резервные секции:</span>
<div class="b" style="left:204px;top:846px;width:246px;height:26px;background:#f0f0f0;border:1px solid #d9d9d9;box-shadow:inset 0 0 0 1px #fafafa;"></div>
<span class="t" style="left:209.30px;top:849.50px;font-size:13px;color:#6d6d6d;letter-spacing:0.120px;">3628</span>
<div class="b" style="left:21px;top:894px;width:13px;height:13px;background:#fff;border:1px solid #cccccc;"></div>
<span class="t" style="left:35.80px;top:886.00px;font-size:13px;color:#7e7e7e;letter-spacing:-0.175px;">Оптимизация внутренней структуры</span>
<span class="t" style="left:40.80px;top:901.50px;font-size:13px;color:#7e7e7e;">(выравнивание по 4К, FAT16/FAT32/EXFAT)</span>
<div class="b" style="left:249px;top:938px;width:87px;height:30px;background:#e1e1e1;border:1px solid #adadad;"></div>
<span class="t" style="left:282.30px;top:945.50px;font-size:12.45px;color:#000;letter-spacing:-0.300px;">OK</span>
<div class="b" style="left:356px;top:938px;width:84px;height:30px;background:#e1e1e1;border:1px solid #adadad;"></div>
<span class="t" style="left:374.80px;top:945.50px;font-size:12.87px;color:#000;letter-spacing:-0.300px;">Отмена</span>
<div class="b" style="left:474px;top:470px;width:662px;height:532px;background:#f0f0f0;border:1px solid #ffb900;box-shadow:0 2px 12px rgba(0,0,0,0.35);"></div>
<div class="b" style="left:474px;top:470px;width:662px;height:26px;background:#ffb900;"></div>
<span class="t" style="left:476.77px;top:475.50px;font-size:13.22px;color:#000;letter-spacing:-0.300px;">Параметры разделов</span>
<svg style="left:1115px;top:478px" width="10" height="10" viewBox="0 0 10 10"><path d="M0.3 0.3 L9.7 9.7 M9.7 0.3 L0.3 9.7" fill="none" stroke="#000" stroke-width="1.2"/></svg>
<div class="b" style="left:487px;top:518px;width:637px;height:176px;border:1px solid #dcdcdc;"></div>
<div class="b" style="left:492.5px;top:516px;width:66.5px;height:5px;background:#f0f0f0;"></div>
<span class="t" style="left:494.80px;top:510.50px;font-size:13px;color:#000;letter-spacing:-0.206px;">Настройки</span>
<span class="t" style="left:504.30px;top:540.50px;font-size:13px;color:#000;letter-spacing:0.528px;">1:</span>
<div class="b" style="left:531px;top:536px;width:70px;height:24px;background:#e2e2e2;border:1px solid #adadad;"></div>
<span class="t" style="left:533.80px;top:540.75px;font-size:13px;color:#000;letter-spacing:0.111px;">FAT16</span>
<svg style="left:587.5px;top:546px" width="9" height="6" viewBox="0 0 9 6"><path d="M0.5 0.5 L4.5 5 L8.5 0.5" fill="none" stroke="#404040" stroke-width="1.1"/></svg>
<span class="t" style="left:606.80px;top:540.75px;font-size:13px;color:#000;letter-spacing:-0.200px;">Размер:</span>
<div class="b" style="left:656px;top:536px;width:99px;height:26px;background:#ffffff;border:1px solid #7a7a7a;"></div>
<span class="t" style="left:700.30px;top:539.30px;font-size:13px;color:#000;">0</span>
<span class="t" style="left:760.30px;top:538.50px;font-size:12.67px;color:#000;letter-spacing:-0.300px;">MB</span>
<span class="t" style="left:793.80px;top:540.50px;font-size:13px;color:#000;letter-spacing:0.142px;">Метка:</span>
<div class="b" style="left:837px;top:536px;width:102px;height:26px;background:#ffffff;border:1px solid #7a7a7a;"></div>
<span class="t" style="left:961.30px;top:540.50px;font-size:13px;color:#000;letter-spacing:-0.249px;">RsvdSecs:</span>
<div class="b" style="left:1027px;top:536px;width:54px;height:26px;background:#ffffff;border:1px solid #7a7a7a;"></div>
<span class="t" style="left:1046.30px;top:539.00px;font-size:13px;color:#000;letter-spacing:-0.284px;">16</span>
<span class="t" style="left:504.30px;top:580.50px;font-size:13px;color:#000;letter-spacing:0.528px;">2:</span>
<div class="b" style="left:531px;top:576px;width:70px;height:24px;background:#e2e2e2;border:1px solid #adadad;"></div>
<span class="t" style="left:533.80px;top:580.75px;font-size:13px;color:#000;letter-spacing:0.111px;">FAT16</span>
<svg style="left:587.5px;top:586px" width="9" height="6" viewBox="0 0 9 6"><path d="M0.5 0.5 L4.5 5 L8.5 0.5" fill="none" stroke="#404040" stroke-width="1.1"/></svg>
<span class="t" style="left:606.80px;top:578.75px;font-size:13px;color:#000;letter-spacing:-0.200px;">Размер:</span>
<div class="b" style="left:656px;top:574px;width:99px;height:26px;background:#ffffff;border:1px solid #7a7a7a;"></div>
<span class="t" style="left:700.30px;top:577.30px;font-size:13px;color:#000;">0</span>
<span class="t" style="left:760.30px;top:578.50px;font-size:12.67px;color:#000;letter-spacing:-0.300px;">MB</span>
<span class="t" style="left:793.80px;top:580.50px;font-size:13px;color:#000;letter-spacing:0.142px;">Метка:</span>
<div class="b" style="left:837px;top:576px;width:102px;height:26px;background:#ffffff;border:1px solid #7a7a7a;"></div>
<span class="t" style="left:961.30px;top:580.50px;font-size:13px;color:#000;letter-spacing:-0.249px;">RsvdSecs:</span>
<div class="b" style="left:1027px;top:576px;width:54px;height:26px;background:#ffffff;border:1px solid #7a7a7a;"></div>
<span class="t" style="left:1046.30px;top:579.00px;font-size:13px;color:#000;letter-spacing:-0.284px;">16</span>
<span class="t" style="left:504.30px;top:620.50px;font-size:13px;color:#000;letter-spacing:0.528px;">3:</span>
<div class="b" style="left:531px;top:616px;width:70px;height:24px;background:#e2e2e2;border:1px solid #adadad;"></div>
<span class="t" style="left:533.80px;top:620.75px;font-size:13px;color:#000;letter-spacing:0.111px;">FAT32</span>
<svg style="left:587.5px;top:626px" width="9" height="6" viewBox="0 0 9 6"><path d="M0.5 0.5 L4.5 5 L8.5 0.5" fill="none" stroke="#404040" stroke-width="1.1"/></svg>
<span class="t" style="left:606.80px;top:618.75px;font-size:13px;color:#000;letter-spacing:-0.200px;">Размер:</span>
<div class="b" style="left:656px;top:614px;width:99px;height:26px;background:#ffffff;border:1px solid #7a7a7a;"></div>
<span class="t" style="left:690.80px;top:617.30px;font-size:13px;color:#000;letter-spacing:-0.130px;">1024</span>
<span class="t" style="left:760.30px;top:618.50px;font-size:12.67px;color:#000;letter-spacing:-0.300px;">MB</span>
<span class="t" style="left:793.80px;top:620.50px;font-size:13px;color:#000;letter-spacing:0.142px;">Метка:</span>
<div class="b" style="left:837px;top:616px;width:102px;height:26px;background:#ffffff;border:1px solid #7a7a7a;"></div>
<span class="t" style="left:879.30px;top:619.00px;font-size:13px;color:#000;letter-spacing:0.722px;">efi</span>
<span class="t" style="left:961.30px;top:620.50px;font-size:13px;color:#000;letter-spacing:-0.249px;">RsvdSecs:</span>
<div class="b" style="left:1027px;top:616px;width:54px;height:26px;background:#ffffff;border:1px solid #7a7a7a;"></div>
<span class="t" style="left:1046.30px;top:619.00px;font-size:13px;color:#000;letter-spacing:-0.284px;">32</span>
<span class="t" style="left:504.30px;top:660.50px;font-size:13px;color:#000;letter-spacing:0.528px;">4:</span>
<div class="b" style="left:531px;top:656px;width:70px;height:24px;background:#e2e2e2;border:1px solid #adadad;"></div>
<span class="t" style="left:533.80px;top:660.75px;font-size:12.67px;color:#000;letter-spacing:-0.300px;">NTFS</span>
<svg style="left:587.5px;top:666px" width="9" height="6" viewBox="0 0 9 6"><path d="M0.5 0.5 L4.5 5 L8.5 0.5" fill="none" stroke="#404040" stroke-width="1.1"/></svg>
<span class="t" style="left:606.80px;top:658.75px;font-size:13px;color:#000;letter-spacing:-0.200px;">Размер:</span>
<div class="b" style="left:656px;top:654px;width:99px;height:26px;background:#f0f0f0;border:1px solid #7a7a7a;"></div>
<span class="t" style="left:686.30px;top:657.30px;font-size:13px;color:#000;letter-spacing:0.049px;">28139</span>
<span class="t" style="left:760.30px;top:658.50px;font-size:12.67px;color:#000;letter-spacing:-0.300px;">MB</span>
<span class="t" style="left:793.80px;top:660.50px;font-size:13px;color:#000;letter-spacing:0.142px;">Метка:</span>
<div class="b" style="left:837px;top:656px;width:102px;height:26px;background:#ffffff;border:1px solid #0078d7;"></div>
<span class="t" style="left:872.80px;top:659.00px;font-size:13px;color:#000;letter-spacing:0.086px;">flash</span>
<span class="t" style="left:961.30px;top:660.50px;font-size:13px;color:#000;letter-spacing:-0.249px;">RsvdSecs:</span>
<div class="b" style="left:1027px;top:656px;width:54px;height:26px;background:#ffffff;border:1px solid #7a7a7a;"></div>
<span class="t" style="left:1046.30px;top:659.00px;font-size:13px;color:#000;letter-spacing:-0.284px;">16</span>
<div class="b" style="left:901px;top:660px;width:1px;height:16px;background:#000;"></div>
<svg style="left:0;top:0" width="1534" height="1003" viewBox="0 0 1534 1003"><defs><filter id="rsh" filterUnits="userSpaceOnUse" x="500" y="620" width="470" height="90"><feDropShadow dx="1" dy="3" stdDeviation="1.5" flood-color="#000" flood-opacity="0.45"/></filter></defs><path d="M531.5 642.5 C600 643.5 700 643.5 755 642.5 C800 641 880 642 939.5 641.5" fill="none" stroke="#ff1212" stroke-width="3.2" stroke-linecap="round" filter="url(#rsh)"/><path d="M521.5 685 L939.5 685" fill="none" stroke="#ff1212" stroke-width="3.2" stroke-linecap="round" filter="url(#rsh)"/></svg>
<div class="b" style="left:487px;top:708px;width:637px;height:89px;border:1px solid #dcdcdc;"></div>
<div class="b" style="left:492.5px;top:706px;width:143.5px;height:5px;background:#f0f0f0;"></div>
<span class="t" style="left:494.80px;top:701.00px;font-size:13px;color:#000;letter-spacing:-0.170px;">Выравнивание раздела</span>
<div class="b" style="left:503px;top:738px;width:13px;height:13px;background:#fff;border:1px solid #333;"><svg style="left:0;top:0" width="11" height="11" viewBox="0 0 11 11"><path d="M1.5 5.5 L4.2 8.3 L9.5 2" fill="none" stroke="#222" stroke-width="1.3"/></svg></div>
<span class="t" style="left:517.80px;top:738.00px;font-size:13px;color:#000;letter-spacing:-0.079px;">Выравнивать разделы по нескольку секторов:</span>
<div class="b" style="left:853px;top:732px;width:88px;height:24px;background:#e2e2e2;border:1px solid #adadad;"></div>
<span class="t" style="left:859.80px;top:736.50px;font-size:13px;color:#000;letter-spacing:-0.005px;">2048</span>
<svg style="left:927.5px;top:741.5px" width="9" height="6" viewBox="0 0 9 6"><path d="M0.5 0.5 L4.5 5 L8.5 0.5" fill="none" stroke="#404040" stroke-width="1.1"/></svg>
<div class="b" style="left:503px;top:771px;width:13px;height:13px;background:#fff;border:1px solid #333;"></div>
<span class="t" style="left:517.80px;top:763.00px;font-size:13px;color:#000;letter-spacing:-0.089px;">Оптимизация внутренней структуры (выравнивать по 4К, только для разделов</span>
<span class="t" style="left:517.80px;top:779.00px;font-size:13px;color:#000;letter-spacing:0.027px;">FAT16/FAT32/ExFAT</span>
<div class="b" style="left:487px;top:812px;width:637px;height:118px;border:1px solid #dcdcdc;"></div>
<div class="b" style="left:493px;top:810px;width:140px;height:5px;background:#f0f0f0;"></div>
<span class="t" style="left:495.30px;top:805.00px;font-size:13px;color:#000;letter-spacing:-0.064px;">Тип таблицы разделов</span>
<div class="b" style="left:503.0px;top:833.5px;width:13px;height:13px;background:#fff;border:1px solid #333;border-radius:50%;"><div class="b" style="left:2px;top:2px;width:7px;height:7px;border-radius:50%;background:#2a2a2a"></div></div>
<span class="t" style="left:518.30px;top:832.50px;font-size:13px;color:#000;letter-spacing:-0.283px;">Таблица раздела MBR</span>
<div class="b" style="left:674.5px;top:833.5px;width:13px;height:13px;background:#fff;border:1px solid #333;border-radius:50%;"></div>
<span class="t" style="left:689.80px;top:832.50px;font-size:13px;color:#000;letter-spacing:-0.269px;">Таблица раздела GUID (GPT)</span>
<div class="b" style="left:503px;top:860px;width:13px;height:13px;background:#fff;border:1px solid #cccccc;"></div>
<span class="t" style="left:517.80px;top:859.50px;font-size:13px;color:#7e7e7e;letter-spacing:-0.189px;">Создать ESP раздел (EFI System Partition, используется при загрузке OS на платформах UEFI BIOS)</span>
<div class="b" style="left:503px;top:896px;width:13px;height:13px;background:#fff;border:1px solid #cccccc;"></div>
<span class="t" style="left:517.80px;top:887.50px;font-size:13px;color:#7e7e7e;letter-spacing:-0.129px;">Создать MSR раздел (Microsoft Reserved Partition, с резервным простанством для последующего</span>
<span class="t" style="left:517.80px;top:903.50px;font-size:13px;color:#7e7e7e;letter-spacing:0.032px;">использования)</span>
<div class="b" style="left:486px;top:936px;width:639px;height:22px;background:#e6e6e6;border:1px solid #bcbcbc;"></div>
<div class="b" style="left:943px;top:966px;width:84px;height:30px;background:#e1e1e1;border:2px solid #0078d7;"></div>
<span class="t" style="left:975.30px;top:973.50px;font-size:12.45px;color:#000;letter-spacing:-0.300px;">OK</span>
<div class="b" style="left:1042px;top:968px;width:84px;height:30px;background:#e1e1e1;border:1px solid #adadad;"></div>
<span class="t" style="left:1060.30px;top:975.50px;font-size:13px;color:#000;letter-spacing:-0.209px;">Отмена</span>
<svg style="left:926.5px;top:935px" width="50" height="60" viewBox="0 0 50 60"><defs><filter id="sh4" x="-50%" y="-50%" width="200%" height="200%"><feDropShadow dx="1" dy="1.5" stdDeviation="1.8" flood-color="#000" flood-opacity="0.5"/></filter></defs><text x="25" y="40" text-anchor="middle" font-family="Liberation Sans, sans-serif" font-weight="bold" font-size="30.5" fill="#ff0000" stroke="#fff" stroke-width="7.5" stroke-linejoin="round" paint-order="stroke" filter="url(#sh4)">4</text></svg>
<div class="b" style="left:695px;top:0px;width:6px;height:116px;background:#1b1b23;"></div>
<div class="b" style="left:695px;top:58px;width:6px;height:4px;background:#2b2b34;"></div>
<div class="b" style="left:695px;top:88px;width:6px;height:28px;background:#26262e;"></div>
<div class="b" style="left:695px;top:116px;width:6px;height:16px;background:#c6c6c6;"></div>
<div class="b" style="left:695px;top:132px;width:6px;height:40px;background:#2c2d2c;"></div>
<div class="b" style="left:695px;top:172px;width:6px;height:35px;background:#d0d0d0;"></div>
<div class="b" style="left:695px;top:195px;width:6px;height:1px;background:#a8a8a8;"></div>
<div class="b" style="left:695px;top:206px;width:6px;height:1px;background:#a8a8a8;"></div>
<div class="b" style="left:695px;top:207px;width:6px;height:155px;background:#eaeaea;"></div>
<div class="b" style="left:694px;top:116px;width:1px;height:246px;background:#9c9c9c;"></div>
<div class="b" style="left:700px;top:31px;width:1px;height:439px;background:#b4b4b4;"></div>
<span class="t" style="left:695.50px;top:181.00px;font-size:10px;color:#444;font-family:'DejaVu Sans', 'Liberation Sans', sans-serif;text-decoration:underline;">u</span>
<div class="b" style="left:1525px;top:0px;width:9px;height:116px;background:#1b1b23;"></div>
<div class="b" style="left:1525px;top:58px;width:9px;height:4px;background:#2b2b34;"></div>
<div class="b" style="left:1525px;top:88px;width:9px;height:28px;background:#26262e;"></div>
<div class="b" style="left:1525px;top:116px;width:9px;height:16px;background:#ececec;"></div>
<div class="b" style="left:1525px;top:132px;width:9px;height:40px;background:#2c2d2c;"></div>
<div class="b" style="left:1525px;top:172px;width:9px;height:320px;background:linear-gradient(90deg,#d8d8d8,#f0f0f0 70%);"></div>
<span class="t" style="left:1525.50px;top:98.00px;font-size:12.5px;color:#c8c8d0;font-family:'DejaVu Sans', 'Liberation Sans', sans-serif;">ре</span>
<div class="b" style="left:695px;top:30px;width:6px;height:30px;overflow:hidden;"><svg style="left:1.5px;top:8px" width="9" height="9" viewBox="0 0 9 9"><path d="M0.3 0.3 L8.7 8.7 M8.7 0.3 L0.3 8.7" fill="none" stroke="#5e5e68" stroke-width="1.1"/></svg></div>
<div class="b" style="left:695px;top:90px;width:6px;height:28px;overflow:hidden;"><svg style="left:-9px;top:7px" width="14" height="14" viewBox="0 0 14 14"><circle cx="6.5" cy="6.7" r="5.5" fill="none" stroke="#c8c8d0" stroke-width="1.1"/><path d="M6.5 1.2 V12.2 M1 6.7 H12" stroke="#c8c8d0" stroke-width="1"/></svg></div>
</body></html>
